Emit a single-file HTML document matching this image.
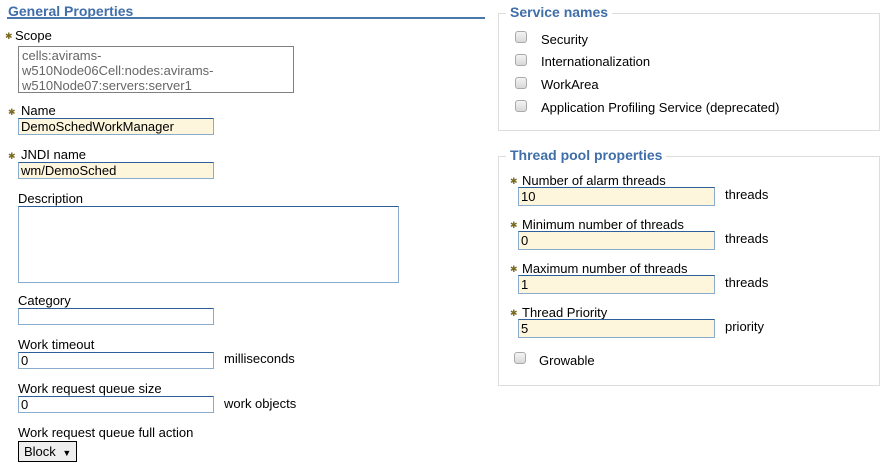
<!DOCTYPE html>
<html><head><style>
*{margin:0;padding:0;box-sizing:border-box}
body{width:890px;height:475px;background:#fff;font-family:"Liberation Sans","DejaVu Sans",sans-serif;font-size:13px;color:#000;position:relative;overflow:hidden}
.a{position:absolute;white-space:nowrap;line-height:14px}
.h{font-weight:bold;color:#3f6ea8;font-size:14px}
.in{position:absolute;height:17px;background:#fef5dd;border:1px solid #8aaccc;border-top-color:#2e5f99;padding-left:2px;line-height:15px;font-size:13px}
.w{background:#fff}
.st{position:absolute;color:#7a6a20;font-size:9px;line-height:10px;font-family:"DejaVu Sans",sans-serif}
.cb{position:absolute;width:12px;height:12px;border:1px solid #aaa;border-radius:3px;background:linear-gradient(#f4f4f4,#d8d8d8)}
.fs{position:absolute;border:1px solid #ddd}
</style></head><body>
<div class="a h" style="left:8px;top:4px">General Properties</div>
<div style="position:absolute;left:7px;top:17px;width:478px;height:2px;background:#4a78ad"></div>

<div class="st" style="left:5px;top:32px">✱</div>
<div class="a" style="left:15px;top:29px">Scope</div>
<div style="position:absolute;left:18px;top:46px;width:276px;height:47px;border:1px solid #808080;color:#666;padding:1px 0 0 3px;line-height:15px">cells:avirams-<br>w510Node06Cell:nodes:avirams-<br>w510Node07:servers:server1</div>

<div class="st" style="left:8px;top:108px">✱</div>
<div class="a" style="left:21px;top:104px">Name</div>
<div class="in" style="left:18px;top:118px;width:196px">DemoSchedWorkManager</div>

<div class="st" style="left:8px;top:152px">✱</div>
<div class="a" style="left:21px;top:148px">JNDI name</div>
<div class="in" style="left:18px;top:162px;width:196px">wm/DemoSched</div>

<div class="a" style="left:18px;top:192px">Description</div>
<div class="in w" style="left:18px;top:206px;width:381px;height:77px"></div>

<div class="a" style="left:18px;top:294px">Category</div>
<div class="in w" style="left:18px;top:308px;width:196px"></div>

<div class="a" style="left:18px;top:338px">Work timeout</div>
<div class="in w" style="left:18px;top:352px;width:196px">0</div>
<div class="a" style="left:224px;top:352px">milliseconds</div>

<div class="a" style="left:18px;top:382px">Work request queue size</div>
<div class="in w" style="left:18px;top:396px;width:196px">0</div>
<div class="a" style="left:224px;top:397px">work objects</div>

<div class="a" style="left:18px;top:426px">Work request queue full action</div>
<div style="position:absolute;left:18px;top:441px;width:59px;height:21px;border:1px solid #000;background:#eee;padding-left:5px;line-height:19px">Block <span style="font-size:9px;margin-left:3px">▼</span></div>

<div class="fs" style="left:498px;top:13px;width:382px;height:118px"></div>
<div class="a h" style="left:506px;top:5px;background:#fff;padding:0 4px">Service names</div>
<div class="cb" style="left:515px;top:31px"></div><div class="a" style="left:541px;top:33px">Security</div>
<div class="cb" style="left:515px;top:54px"></div><div class="a" style="left:541px;top:55px">Internationalization</div>
<div class="cb" style="left:515px;top:77px"></div><div class="a" style="left:541px;top:78px">WorkArea</div>
<div class="cb" style="left:515px;top:100px"></div><div class="a" style="left:541px;top:101px">Application Profiling Service (deprecated)</div>

<div class="fs" style="left:498px;top:156px;width:382px;height:230px"></div>
<div class="a h" style="left:506px;top:148px;background:#fff;padding:0 4px">Thread pool properties</div>

<div class="st" style="left:510px;top:177px">✱</div><div class="a" style="left:522px;top:174px">Number of alarm threads</div>
<div class="in" style="left:518px;top:187px;width:197px;height:19px;line-height:17px">10</div><div class="a" style="left:725px;top:188px">threads</div>

<div class="st" style="left:510px;top:221px">✱</div><div class="a" style="left:522px;top:218px">Minimum number of threads</div>
<div class="in" style="left:518px;top:231px;width:197px;height:19px;line-height:17px">0</div><div class="a" style="left:725px;top:232px">threads</div>

<div class="st" style="left:510px;top:265px">✱</div><div class="a" style="left:522px;top:262px">Maximum number of threads</div>
<div class="in" style="left:518px;top:275px;width:197px;height:19px;line-height:17px">1</div><div class="a" style="left:725px;top:276px">threads</div>

<div class="st" style="left:510px;top:309px">✱</div><div class="a" style="left:522px;top:306px">Thread Priority</div>
<div class="in" style="left:518px;top:319px;width:197px;height:19px;line-height:17px">5</div><div class="a" style="left:725px;top:320px">priority</div>

<div class="cb" style="left:514px;top:352px"></div><div class="a" style="left:539px;top:354px">Growable</div>
</body></html>
